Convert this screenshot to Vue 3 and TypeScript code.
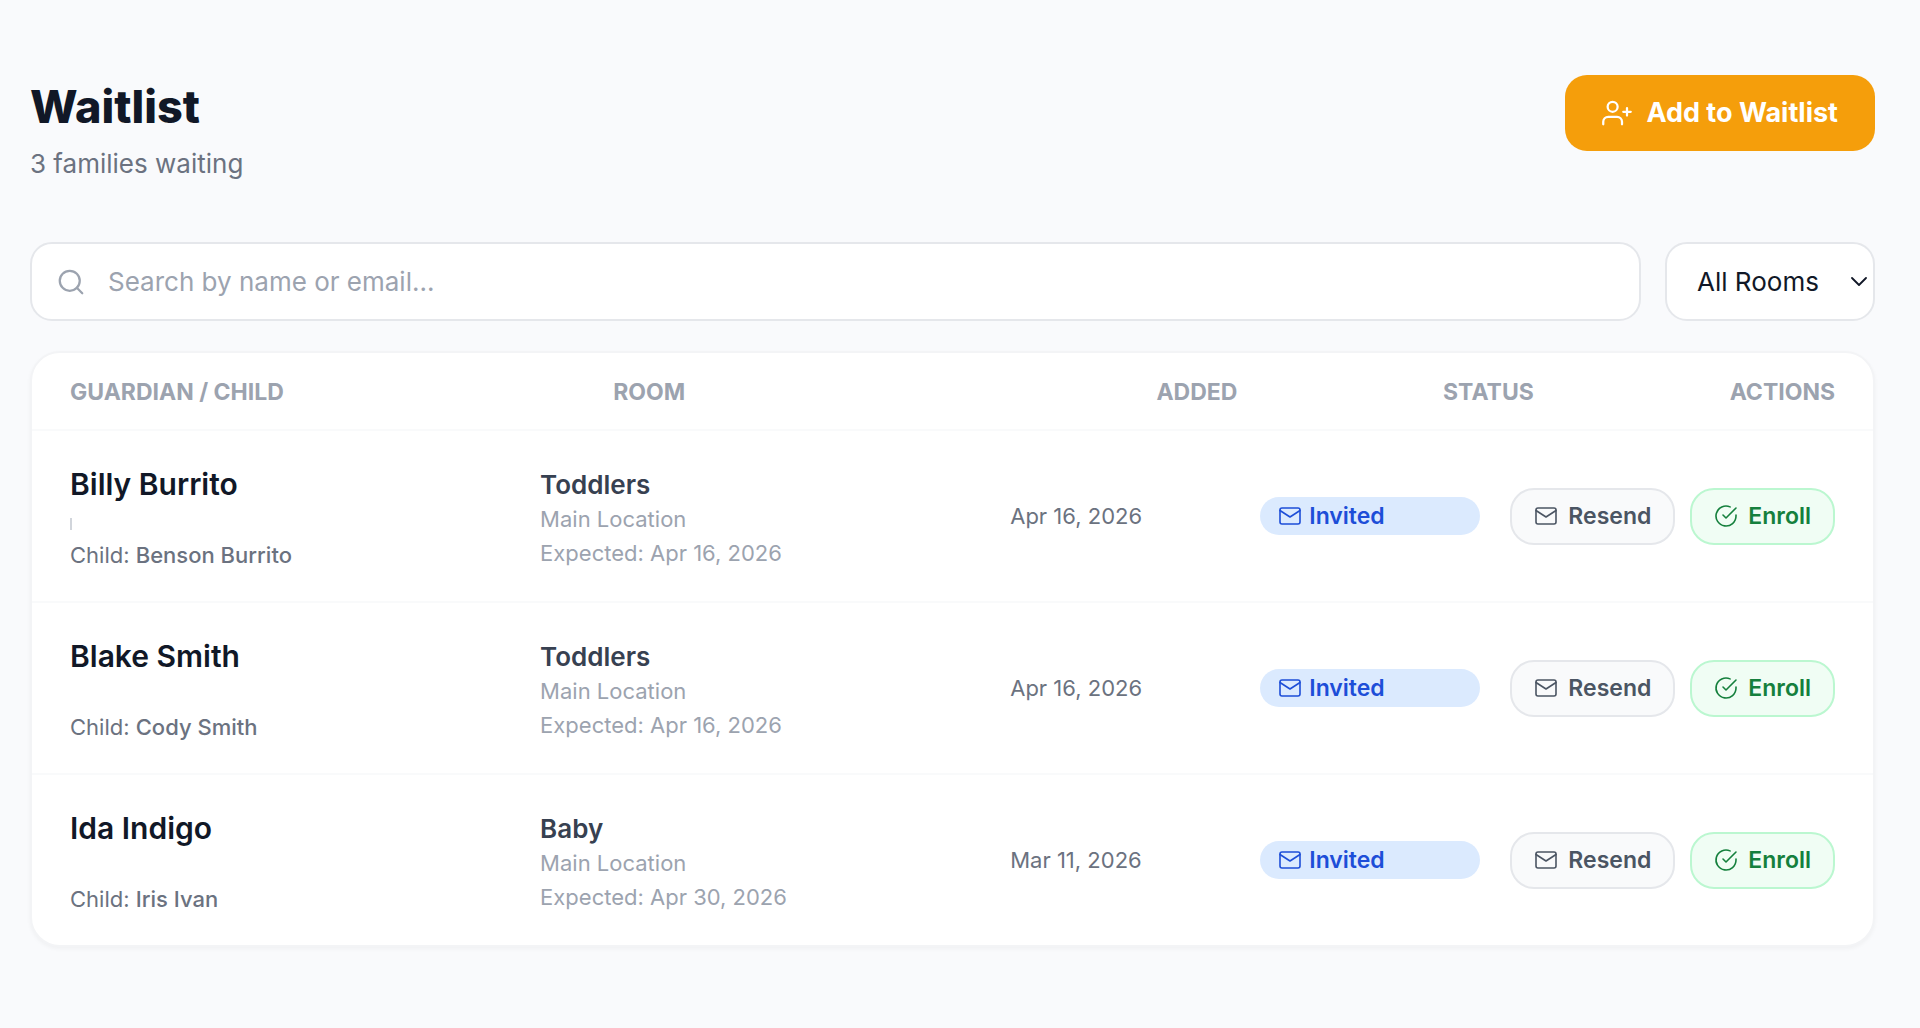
<script setup lang="ts">
import { computed, ref } from 'vue'

interface Entry {
  guardian: string
  child: string
  room: string
  location: string
  expected: string
  added: string
  partialEmail: boolean
}

const entries: Entry[] = [
  { guardian: 'Billy Burrito', child: 'Benson Burrito', room: 'Toddlers', location: 'Main Location', expected: 'Apr 16, 2026', added: 'Apr 16, 2026', partialEmail: true },
  { guardian: 'Blake Smith', child: 'Cody Smith', room: 'Toddlers', location: 'Main Location', expected: 'Apr 16, 2026', added: 'Apr 16, 2026', partialEmail: false },
  { guardian: 'Ida Indigo', child: 'Iris Ivan', room: 'Baby', location: 'Main Location', expected: 'Apr 30, 2026', added: 'Mar 11, 2026', partialEmail: false },
]

const query = ref('')
const room = ref('')

const visible = computed(() =>
  entries.filter(
    (e) =>
      (!room.value || e.room === room.value) &&
      `${e.guardian} ${e.child}`.toLowerCase().includes(query.value.toLowerCase()),
  ),
)
</script>

<template>
  <main class="page">
    <header class="top">
      <div>
        <h1>Waitlist</h1>
        <p class="subtitle">{{ entries.length }} families waiting</p>
      </div>
      <button type="button" class="add">
        <svg class="icon-lg" viewBox="0 0 24 24" aria-hidden="true">
          <path d="M16 21v-2a4 4 0 0 0-4-4H5a4 4 0 0 0-4 4v2" />
          <circle cx="8.5" cy="7" r="4" />
          <path d="M20 8v6M23 11h-6" />
        </svg>
        <span>Add to Waitlist</span>
      </button>
    </header>

    <div class="filters">
      <label class="search">
        <svg class="icon-lg" viewBox="0 0 24 24" aria-hidden="true">
          <circle cx="11" cy="11" r="8" />
          <path d="M21 21l-4.35-4.35" />
        </svg>
        <input v-model="query" type="text" placeholder="Search by name or email..." aria-label="Search by name or email" />
      </label>
      <div class="rooms">
        <select v-model="room" aria-label="Room">
          <option value="">All Rooms</option>
          <option value="Toddlers">Toddlers</option>
          <option value="Baby">Baby</option>
        </select>
        <svg class="chevron" viewBox="0 0 16 10" aria-hidden="true">
          <path d="M1 1l7 7 7-7" />
        </svg>
      </div>
    </div>

    <table class="card">
      <thead>
        <tr>
          <th scope="col">GUARDIAN / CHILD</th>
          <th scope="col">ROOM</th>
          <th scope="col">ADDED</th>
          <th scope="col">STATUS</th>
          <th scope="col">ACTIONS</th>
        </tr>
      </thead>
      <tbody>
        <tr v-for="e in visible" :key="e.guardian">
          <td class="stack">
            <div class="name">{{ e.guardian }}</div>
            <div class="email"><span v-if="e.partialEmail" class="stem"></span></div>
            <div class="child">Child: <b>{{ e.child }}</b></div>
          </td>
          <td class="stack">
            <div class="room">{{ e.room }}</div>
            <div class="muted">{{ e.location }}</div>
            <div class="muted">Expected: {{ e.expected }}</div>
          </td>
          <td class="added">{{ e.added }}</td>
          <td>
            <span class="pill">
              <svg class="icon" viewBox="0 0 24 24" aria-hidden="true">
                <rect x="2" y="4" width="20" height="16" rx="2" />
                <path d="M22 6.5l-10 6.5L2 6.5" />
              </svg>
              Invited
            </span>
          </td>
          <td class="actions">
            <button type="button" class="action">
              <svg class="icon" viewBox="0 0 24 24" aria-hidden="true">
                <rect x="2" y="4" width="20" height="16" rx="2" />
                <path d="M22 6.5l-10 6.5L2 6.5" />
              </svg>
              Resend
            </button>
            <button type="button" class="action enroll">
              <svg class="icon" viewBox="0 0 24 24" aria-hidden="true">
                <path d="M22 11.08V12a10 10 0 1 1-5.93-9.14" />
                <path d="M22 4L12 14.01l-3-3" />
              </svg>
              Enroll
            </button>
          </td>
        </tr>
      </tbody>
    </table>
  </main>
</template>

<style>
body {
  background: #f9fafc;
}
</style>

<style scoped>
.page {
  box-sizing: border-box;
  padding: 75px 45px 80px 30px;
  font-family: Inter, "Liberation Sans", sans-serif;
  font-size: 23px;
  line-height: 34px;
  color: #111827;
}
button,
input,
select {
  font: inherit;
  color: inherit;
}
svg {
  flex: none;
  fill: none;
  stroke: currentColor;
  stroke-width: 1.8;
  stroke-linecap: round;
  stroke-linejoin: round;
}
.icon {
  width: 24px;
  height: 24px;
  stroke-width: 1.6;
}
.icon-lg {
  width: 30px;
  height: 30px;
}
.top {
  display: flex;
  justify-content: space-between;
  align-items: flex-start;
  margin-bottom: 60px;
}
h1 {
  margin: 0 0 6px;
  font-size: 45px;
  line-height: 64px;
  font-weight: 800;
}
.subtitle {
  margin: 0;
  font-size: 26px;
  line-height: 37px;
  color: #6b7280;
}
.add {
  display: flex;
  align-items: center;
  gap: 14px;
  height: 76px;
  padding: 0 37px;
  border: 0;
  border-radius: 22px;
  background: #f59e0b;
  color: #fff;
  font-size: 27px;
  font-weight: 700;
}
.filters {
  display: flex;
  gap: 24px;
  margin-bottom: 30px;
}
.search {
  box-sizing: border-box;
  flex: 1;
  display: flex;
  align-items: center;
  gap: 22px;
  height: 79px;
  padding: 0 24px;
  border: 2px solid #e5e7eb;
  border-radius: 22px;
  background: #fff;
  color: #9ca3af;
}
.search input {
  flex: 1;
  min-width: 0;
  padding: 0;
  border: 0;
  outline: 0;
  background: none;
  font-size: 26px;
  color: #111827;
}
.search input::placeholder {
  color: #9ca3af;
  opacity: 1;
}
.rooms {
  position: relative;
}
.rooms select {
  appearance: none;
  box-sizing: border-box;
  width: 210px;
  height: 79px;
  padding: 0 30px;
  border: 2px solid #e5e7eb;
  border-radius: 22px;
  background: #fff;
  font-size: 26px;
}
.chevron {
  position: absolute;
  right: 8px;
  top: 35px;
  width: 16px;
  height: 10px;
  pointer-events: none;
}
.card {
  display: block;
  border: 2px solid #f3f4f6;
  border-radius: 30px;
  background: #fff;
  box-shadow: 0 2px 4px rgba(0, 0, 0, 0.04);
}
thead,
tbody {
  display: block;
}
tr {
  display: grid;
  grid-template-columns: 2fr 2fr 1fr 1fr auto;
  align-items: center;
  gap: 30px;
  padding: 29px 38px;
}
thead tr {
  padding: 22px 38px 20px;
}
tbody tr {
  border-top: 2px solid #f9fafb;
}
th,
td {
  padding: 0;
  text-align: left;
}
th {
  font-size: 23px;
  font-weight: 700;
  color: #9ca3af;
}
td.stack {
  padding-top: 6px;
}
.name {
  font-size: 30px;
  line-height: 36px;
  font-weight: 600;
}
.email {
  display: flex;
  align-items: flex-end;
  height: 36px;
}
.stem {
  width: 2px;
  height: 12px;
  margin-bottom: 8px;
  background: #d1d5db;
}
.child,
.added {
  font-size: 22px;
  color: #6b7280;
}
.child b {
  font-weight: 500;
}
.room {
  font-size: 26px;
  font-weight: 600;
  color: #374151;
}
.muted {
  font-size: 22px;
  color: #9ca3af;
}
.pill {
  display: flex;
  align-items: center;
  gap: 7px;
  height: 38px;
  padding: 0 18px;
  border-radius: 19px;
  background: #dbeafe;
  color: #1d4ed8;
  font-weight: 600;
}
.actions {
  display: flex;
  gap: 15px;
}
.action {
  display: flex;
  align-items: center;
  gap: 10px;
  box-sizing: border-box;
  height: 57px;
  padding: 0 22px;
  border: 2px solid #e5e7eb;
  border-radius: 24px;
  background: #f9fafb;
  color: #4b5563;
  font-weight: 600;
}
.enroll {
  border-color: #bbf7d0;
  background: #f0fdf4;
  color: #15803d;
}
</style>
